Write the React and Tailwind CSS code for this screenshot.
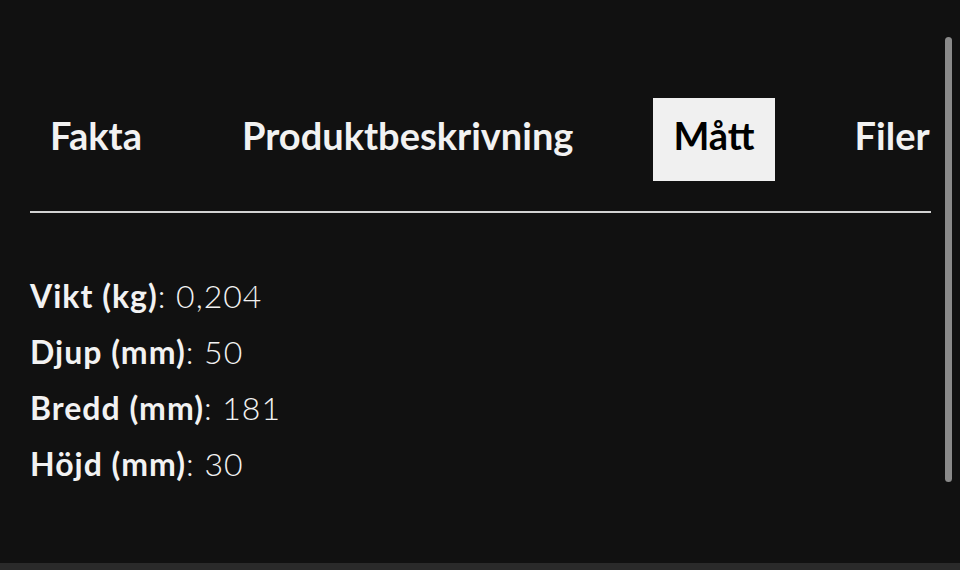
import React, { useState } from "react";

const tabs = ["Fakta", "Produktbeskrivning", "Mått", "Filer"];

const specs = [
  { label: "Vikt (kg)", value: "0,204" },
  { label: "Djup (mm)", value: "50" },
  { label: "Bredd (mm)", value: "181" },
  { label: "Höjd (mm)", value: "30" },
];

const App = () => {
  const [active, setActive] = useState("Mått");

  return (
    <div
      className="relative flex h-[570px] w-[960px] flex-col overflow-hidden bg-[#111111] text-[#f2f2f2]"
      style={{ fontFamily: "Lato, 'Open Sans', sans-serif" }}
    >
      <div className="flex-1 px-[30px] pt-[98px]">
        {/* tab row */}
        <div className="flex items-center gap-[60px] whitespace-nowrap">
          {tabs.map((tab) => (
            <button
              key={tab}
              onClick={() => setActive(tab)}
              className={
                tab === active
                  ? "h-[83px] bg-[#f0f0f0] px-5 pb-[8px] text-[38px] font-bold text-black"
                  : "h-[83px] px-5 pb-[8px] text-[38px] font-bold text-[#f2f2f2]"
              }
            >
              {tab}
            </button>
          ))}
        </div>

        <div className="mt-[30px] h-[2px] w-[901px] bg-[#d2d2d2]" />

        {/* dimensions */}
        <div className="mt-[55px] flex flex-col">
          {specs.map((s) => (
            <p key={s.label} className="text-[32px] leading-[56px] tracking-[1px]">
              <span className="font-bold">{s.label}</span>
              <span className="font-light">: {s.value}</span>
            </p>
          ))}
        </div>
      </div>

      <div className="h-[7px] bg-[#2a2a2a]" />

      {/* overlay scrollbar */}
      <div className="absolute right-[8px] top-[37px] h-[445px] w-[7px] rounded-full bg-[#8a8a8a]" />
    </div>
  );
};

export default App;
